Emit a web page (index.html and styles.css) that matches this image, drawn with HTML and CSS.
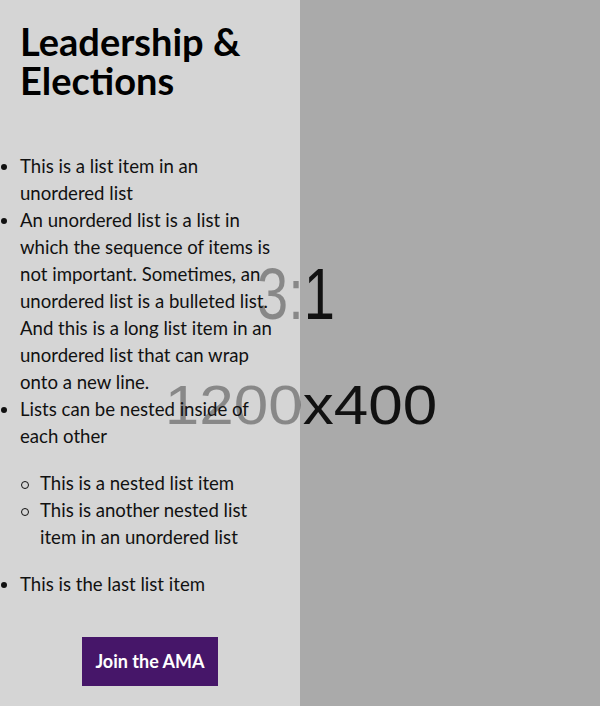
FILE: index.html
```html
<!DOCTYPE html>
<html lang="en">
<head>
<meta charset="utf-8">
<title>Leadership &amp; Elections</title>
<link rel="stylesheet" href="styles.css">
</head>
<body>
<section class="hero">
  <div class="hero-image" role="img" aria-label="3:1 1200x400 placeholder">
    <span class="ph-ratio">3:1</span>
    <span class="ph-size">1200x400</span>
  </div>
  <div class="panel">
    <h2 class="panel-title">Leadership &amp; Elections</h2>
    <ul class="list">
      <li>This is a list item in an unordered list</li>
      <li>An unordered list is a list in which the sequence of items is not important. Sometimes, an unordered list is a bulleted list. And this is a long list item in an unordered list that can wrap onto a new line.</li>
      <li>Lists can be nested inside of each other
        <ul class="list list-nested">
          <li>This is a nested list item</li>
          <li>This is another nested list item in an unordered list</li>
        </ul>
      </li>
      <li>This is the last list item</li>
    </ul>
    <div class="actions">
      <a class="btn" href="#">Join the AMA</a>
    </div>
  </div>
</section>
</body>
</html>
```
FILE: styles.css
```css
* { box-sizing: border-box; }
html, body { margin: 0; padding: 0; }
body {
  font-family: "Lato", "Liberation Sans", sans-serif;
  color: #111;
  background: #aaaaaa;
}
.hero {
  display: grid;
  grid-template-columns: 300px 300px;
  min-height: 706px;
}
.hero-image {
  grid-row: 1;
  grid-column: 1 / 3;
  background: #aaaaaa;
  display: flex;
  flex-direction: column;
  align-items: center;
  justify-content: flex-start;
  padding-top: 267px;
  font-family: "Liberation Sans", Arial, sans-serif;
  color: #111;
  line-height: 1;
}
.ph-ratio {
  font-size: 56px;
  transform: translateX(-4px) scaleY(1.28);
}
.ph-size {
  font-size: 62px;
  margin-top: 51px;
  transform: scaleY(0.91);
  margin-left: 2px;
}
.panel {
  grid-row: 1;
  grid-column: 1;
  position: relative;
  background: rgba(255, 255, 255, 0.5);
  padding: 22px 20px 20px;
  display: flex;
  flex-direction: column;
}
.panel-title {
  margin: 0;
  font-size: 38px;
  line-height: 39px;
  font-weight: 700;
  color: #000;
}
.list {
  list-style: none;
  margin: 53px 0 0;
  padding: 0;
  font-size: 18.6px;
  line-height: 27px;
}
.list > li { position: relative; }
.list > li::before {
  content: "";
  position: absolute;
  left: -19px;
  top: 11px;
  width: 6px;
  height: 6px;
  border-radius: 50%;
  background: #111;
}
.list-nested {
  margin: 20px 0;
  padding-left: 20px;
}
.list-nested > li::before {
  background: transparent;
  border: 1px solid #111;
}
.actions {
  display: flex;
  justify-content: center;
  margin-top: 39px;
}
.btn {
  display: inline-block;
  background: #461669;
  color: #fff;
  text-decoration: none;
  font-weight: 700;
  font-size: 18px;
  line-height: 27px;
  padding: 11px 13px;
}
```
